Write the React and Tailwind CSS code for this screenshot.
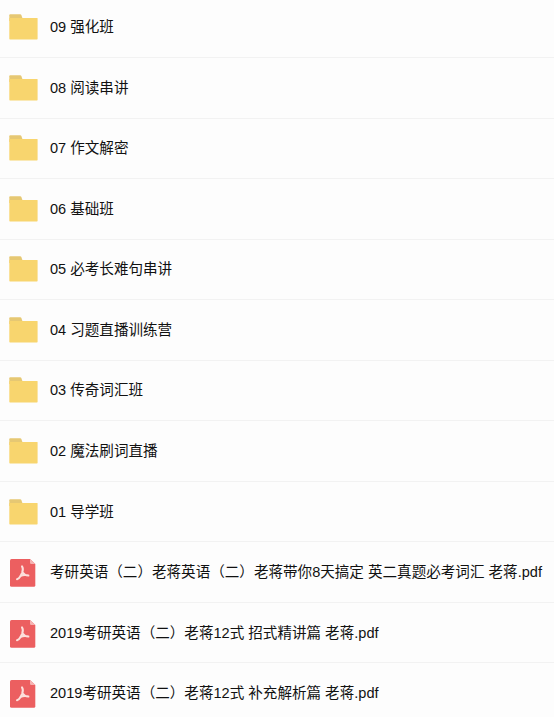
import React from "react";

const files = [
  { type: "folder", name: "09 强化班" },
  { type: "folder", name: "08 阅读串讲" },
  { type: "folder", name: "07 作文解密" },
  { type: "folder", name: "06 基础班" },
  { type: "folder", name: "05 必考长难句串讲" },
  { type: "folder", name: "04 习题直播训练营" },
  { type: "folder", name: "03 传奇词汇班" },
  { type: "folder", name: "02 魔法刷词直播" },
  { type: "folder", name: "01 导学班" },
  { type: "pdf", name: "考研英语（二）老蒋英语（二）老蒋带你8天搞定 英二真题必考词汇 老蒋.pdf" },
  { type: "pdf", name: "2019考研英语（二）老蒋12式 招式精讲篇 老蒋.pdf" },
  { type: "pdf", name: "2019考研英语（二）老蒋12式 补充解析篇 老蒋.pdf" },
];

function FolderIcon() {
  return (
    <svg className="h-[26px] w-[29px]" viewBox="0 0 29 26" fill="none">
      <path d="M0.3 1.2Q0.3 0.3 1.2 0.3H11.2Q12 0.3 12.4 1.1L13.2 3.6V7H0.3Z" fill="#e6c873" />
      <path d="M0.3 4H28Q28.6 4 28.6 4.6V24.8Q28.6 25.5 27.9 25.5H1Q0.3 25.5 0.3 24.8Z" fill="#f8d56e" />
    </svg>
  );
}

function PdfIcon() {
  return (
    <svg className="ml-px mt-0.5 h-7 w-[26px]" viewBox="0 0 26 28" fill="none">
      <path d="M1.5 0H20L25.3 5V26.3Q25.3 27.8 23.8 27.8H1.5Q0 27.8 0 26.3V1.5Q0 0 1.5 0Z" fill="#ec5f60" />
      <path d="M20 0L25.3 5H21.2Q20 5 20 3.8Z" fill="#f6b4b3" />
      <path
        d="M12 7.4C13.4 9.4 12.8 12 12.2 13.6L10.4 17.2C9.4 18.9 8.2 19.9 7 20.2M12.4 13.2C13.6 15 15.4 16.3 18.4 16.6M10.4 17C12 16.2 13.8 15.9 15.6 16"
        stroke="#fde0dc"
        strokeWidth="2"
        strokeLinecap="round"
        strokeLinejoin="round"
      />
    </svg>
  );
}

function FileRow({ file }) {
  return (
    <li className="flex h-[60.55px] items-center border-b border-[#f2f2f2] pl-[9px]">
      <div className="w-[41px] shrink-0">
        {file.type === "folder" ? <FolderIcon /> : <PdfIcon />}
      </div>
      <span className="whitespace-nowrap text-[14.57px] leading-5 text-[#111]">{file.name}</span>
    </li>
  );
}

export default function App() {
  return (
    <div className="h-[717px] w-full overflow-hidden bg-[#fdfdfd] font-['Liberation_Sans','Noto_Sans_CJK_SC',sans-serif]">
      <ul className="-mt-[2.6px]">
        {files.map((file) => (
          <FileRow file={file} key={file.name} />
        ))}
      </ul>
    </div>
  );
}
